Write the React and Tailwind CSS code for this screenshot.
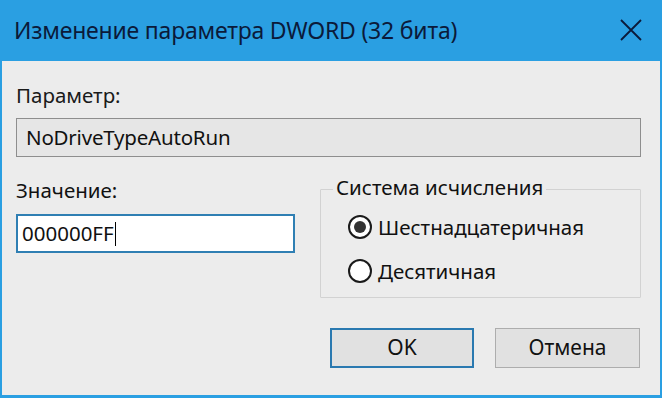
import React from "react";

export default function App() {
  const font = { fontFamily: '"Noto Sans", "Open Sans", sans-serif' };
  return (
    <div className="w-[662px] h-[398px] flex flex-col bg-[#2a9fe2] overflow-hidden" style={font}>
      <div className="h-[61px] flex items-center justify-between pl-[14px] pr-[20px] shrink-0">
        <span className="text-[23px] text-[#0b1a3a] tracking-[-0.2px]">Изменение параметра DWORD (32 бита)</span>
        <svg width="22" height="22" viewBox="0 0 22 22" className="mb-[1px]">
          <path d="M1 1 L21 21 M21 1 L1 21" stroke="#0b1a3a" strokeWidth="1.8" />
        </svg>
      </div>
      <div className="flex-1 mx-[2px] mb-[3px] bg-[#ececec] pl-[14px] pr-[19px] pt-[22px] flex flex-col text-[#111]">
        <div className="text-[20.5px] leading-[24px] text-[#1a1a1a]">Параметр:</div>
        <div className="mt-[11px] h-[39px] border border-[#8e8e8e] bg-[#e6e6e6] flex items-center px-[9px] text-[20.5px] tracking-[-0.2px]">
          NoDriveTypeAutoRun
        </div>
        <div className="flex mt-[28px]">
          <div className="w-[279px] flex flex-col">
            <div className="text-[20.5px] leading-[24px] -mt-[7px]">Значение:</div>
            <div className="mt-[12px] h-[39px] border-2 border-[#2f7fb3] bg-white flex items-center px-[4px] text-[20.5px]">
              000000FF<span className="inline-block w-[1.5px] h-[24px] bg-black ml-[1px]"></span>
            </div>
          </div>
          <div className="ml-[25px] flex-1 relative mt-[4px] h-[109px] border border-[#d2d2d2] rounded-[1px]">
            <span className="absolute -top-[15px] left-[12px] px-[3px] bg-[#ececec] text-[20.5px] leading-[24px]">Система исчисления</span>
            <div className="flex flex-col pl-[27px] pt-[25px] gap-[20px]">
              <div className="flex items-center gap-[6px]">
                <span className="w-[24px] h-[24px] rounded-full border-2 border-[#1a1a1a] bg-white flex items-center justify-center">
                  <span className="w-[12px] h-[12px] rounded-full bg-[#333]"></span>
                </span>
                <span className="text-[20.5px] leading-[24px]">Шестнадцатеричная</span>
              </div>
              <div className="flex items-center gap-[6px]">
                <span className="w-[24px] h-[24px] rounded-full border-2 border-[#1a1a1a] bg-white"></span>
                <span className="text-[20.5px] leading-[24px]">Десятичная</span>
              </div>
            </div>
          </div>
        </div>
        <div className="flex justify-end gap-[21px] mt-[30px] mr-[1px]">
          <button className="w-[144px] h-[40px] border-2 border-[#2a79b0] bg-[#e1e1e1] text-[21px] text-[#111]">OK</button>
          <button className="w-[145px] h-[40px] border border-[#adadad] bg-[#e1e1e1] text-[21px] text-[#111]">Отмена</button>
        </div>
      </div>
    </div>
  );
}
